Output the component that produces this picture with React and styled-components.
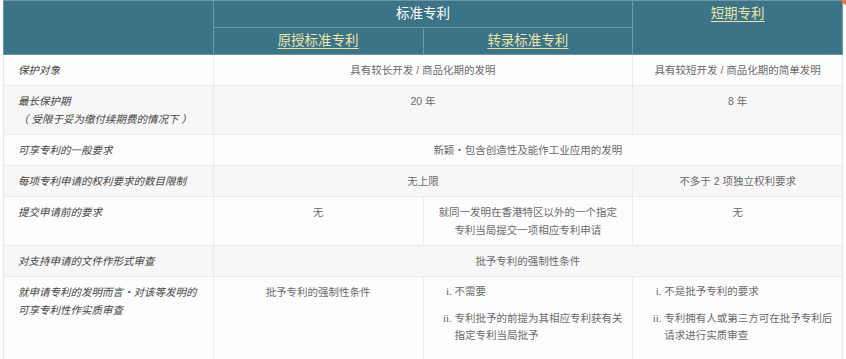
import React from "react";
import styled, { createGlobalStyle } from "styled-components";

const GlobalStyle = createGlobalStyle`
  body {
    margin: 0;
    background: #fff;
  }
`;

const Page = styled.div`
  position: relative;
  padding: 0 3px;
  width: 840px;
  font-family: "Liberation Sans", "Noto Sans CJK SC", sans-serif;
`;

const Corner = styled.span`
  position: absolute;
  top: -7px;
  right: -7px;
  width: 12px;
  height: 12px;
  border-radius: 50%;
  background: #f07a3c;
`;

const Table = styled.table`
  width: 840px;
  border-collapse: collapse;
  table-layout: fixed;
  box-shadow: 0 1px 2px rgba(0, 0, 0, 0.08);
`;

const HeadCell = styled.th`
  background: #3b7387;
  border: 1px solid #6c98a9;
  color: #fff;
  font-weight: 400;
  font-size: 13.5px;
  line-height: 18px;
  padding: 4px 8px;
  vertical-align: top;
  text-align: center;
`;

const SubTitle = styled.span`
  color: #ede5a8;
  text-decoration: underline;
  text-decoration-thickness: 1px;
  text-underline-offset: 3px;
`;

const Row = styled.tr`
  background: ${(p) => (p.$shaded ? "#f7f7f7" : "#fdfdfd")};
`;

const Label = styled.td`
  border: 1px solid #ebebeb;
  padding: 6px 14px;
  vertical-align: top;
  text-align: left;
  font-size: 10.5px;
  line-height: 18px;
  font-style: italic;
  color: #454545;
`;

const Cell = styled.td`
  border: 1px solid #ebebeb;
  padding: 6px 8px;
  vertical-align: top;
  text-align: ${(p) => (p.$left ? "left" : "center")};
  font-size: 10.5px;
  line-height: 18px;
  color: #6a6a6a;
`;

const RomanList = styled.ol`
  margin: 0;
  padding-left: 23px;
  list-style: lower-roman;

  li {
    line-height: 17px;
    margin-bottom: 10px;
  }

  li::marker {
    font-family: "Liberation Serif", serif;
    font-size: 11px;
  }
`;

const App = () => {
  return (
    <Page>
      <GlobalStyle />
      <Corner />
      <Table>
        <thead>
          <tr>
            <HeadCell rowSpan={2} />
            <HeadCell colSpan={2}>标准专利</HeadCell>
            <HeadCell rowSpan={2}>
              <SubTitle>短期专利</SubTitle>
            </HeadCell>
          </tr>
          <tr>
            <HeadCell>
              <SubTitle>原授标准专利</SubTitle>
            </HeadCell>
            <HeadCell>
              <SubTitle>转录标准专利</SubTitle>
            </HeadCell>
          </tr>
        </thead>
        <tbody>
          <Row>
            <Label>保护对象</Label>
            <Cell colSpan={2}>具有较长开发 / 商品化期的发明</Cell>
            <Cell>具有较短开发 / 商品化期的简单发明</Cell>
          </Row>
          <Row $shaded>
            <Label>
              最长保护期
              <br />
              （ 受限于妥为缴付续期费的情况下 ）
            </Label>
            <Cell colSpan={2}>20 年</Cell>
            <Cell>8 年</Cell>
          </Row>
          <Row>
            <Label>可享专利的一般要求</Label>
            <Cell colSpan={3}>新颖・包含创造性及能作工业应用的发明</Cell>
          </Row>
          <Row $shaded>
            <Label>每项专利申请的权利要求的数目限制</Label>
            <Cell colSpan={2}>无上限</Cell>
            <Cell>不多于 2 项独立权利要求</Cell>
          </Row>
          <Row>
            <Label>提交申请前的要求</Label>
            <Cell>无</Cell>
            <Cell>
              就同一发明在香港特区以外的一个指定
              <br />
              专利当局提交一项相应专利申请
            </Cell>
            <Cell>无</Cell>
          </Row>
          <Row $shaded>
            <Label>对支持申请的文件作形式审查</Label>
            <Cell colSpan={3}>批予专利的强制性条件</Cell>
          </Row>
          <Row>
            <Label>
              就申请专利的发明而言・对该等发明的
              <br />
              可享专利性作实质审查
            </Label>
            <Cell>批予专利的强制性条件</Cell>
            <Cell $left>
              <RomanList>
                <li>不需要</li>
                <li>
                  专利批予的前提为其相应专利获有关
                  <br />
                  指定专利当局批予
                </li>
              </RomanList>
            </Cell>
            <Cell $left>
              <RomanList>
                <li>不是批予专利的要求</li>
                <li>
                  专利拥有人或第三方可在批予专利后
                  <br />
                  请求进行实质审查
                </li>
              </RomanList>
            </Cell>
          </Row>
        </tbody>
      </Table>
    </Page>
  );
};

export default App;
